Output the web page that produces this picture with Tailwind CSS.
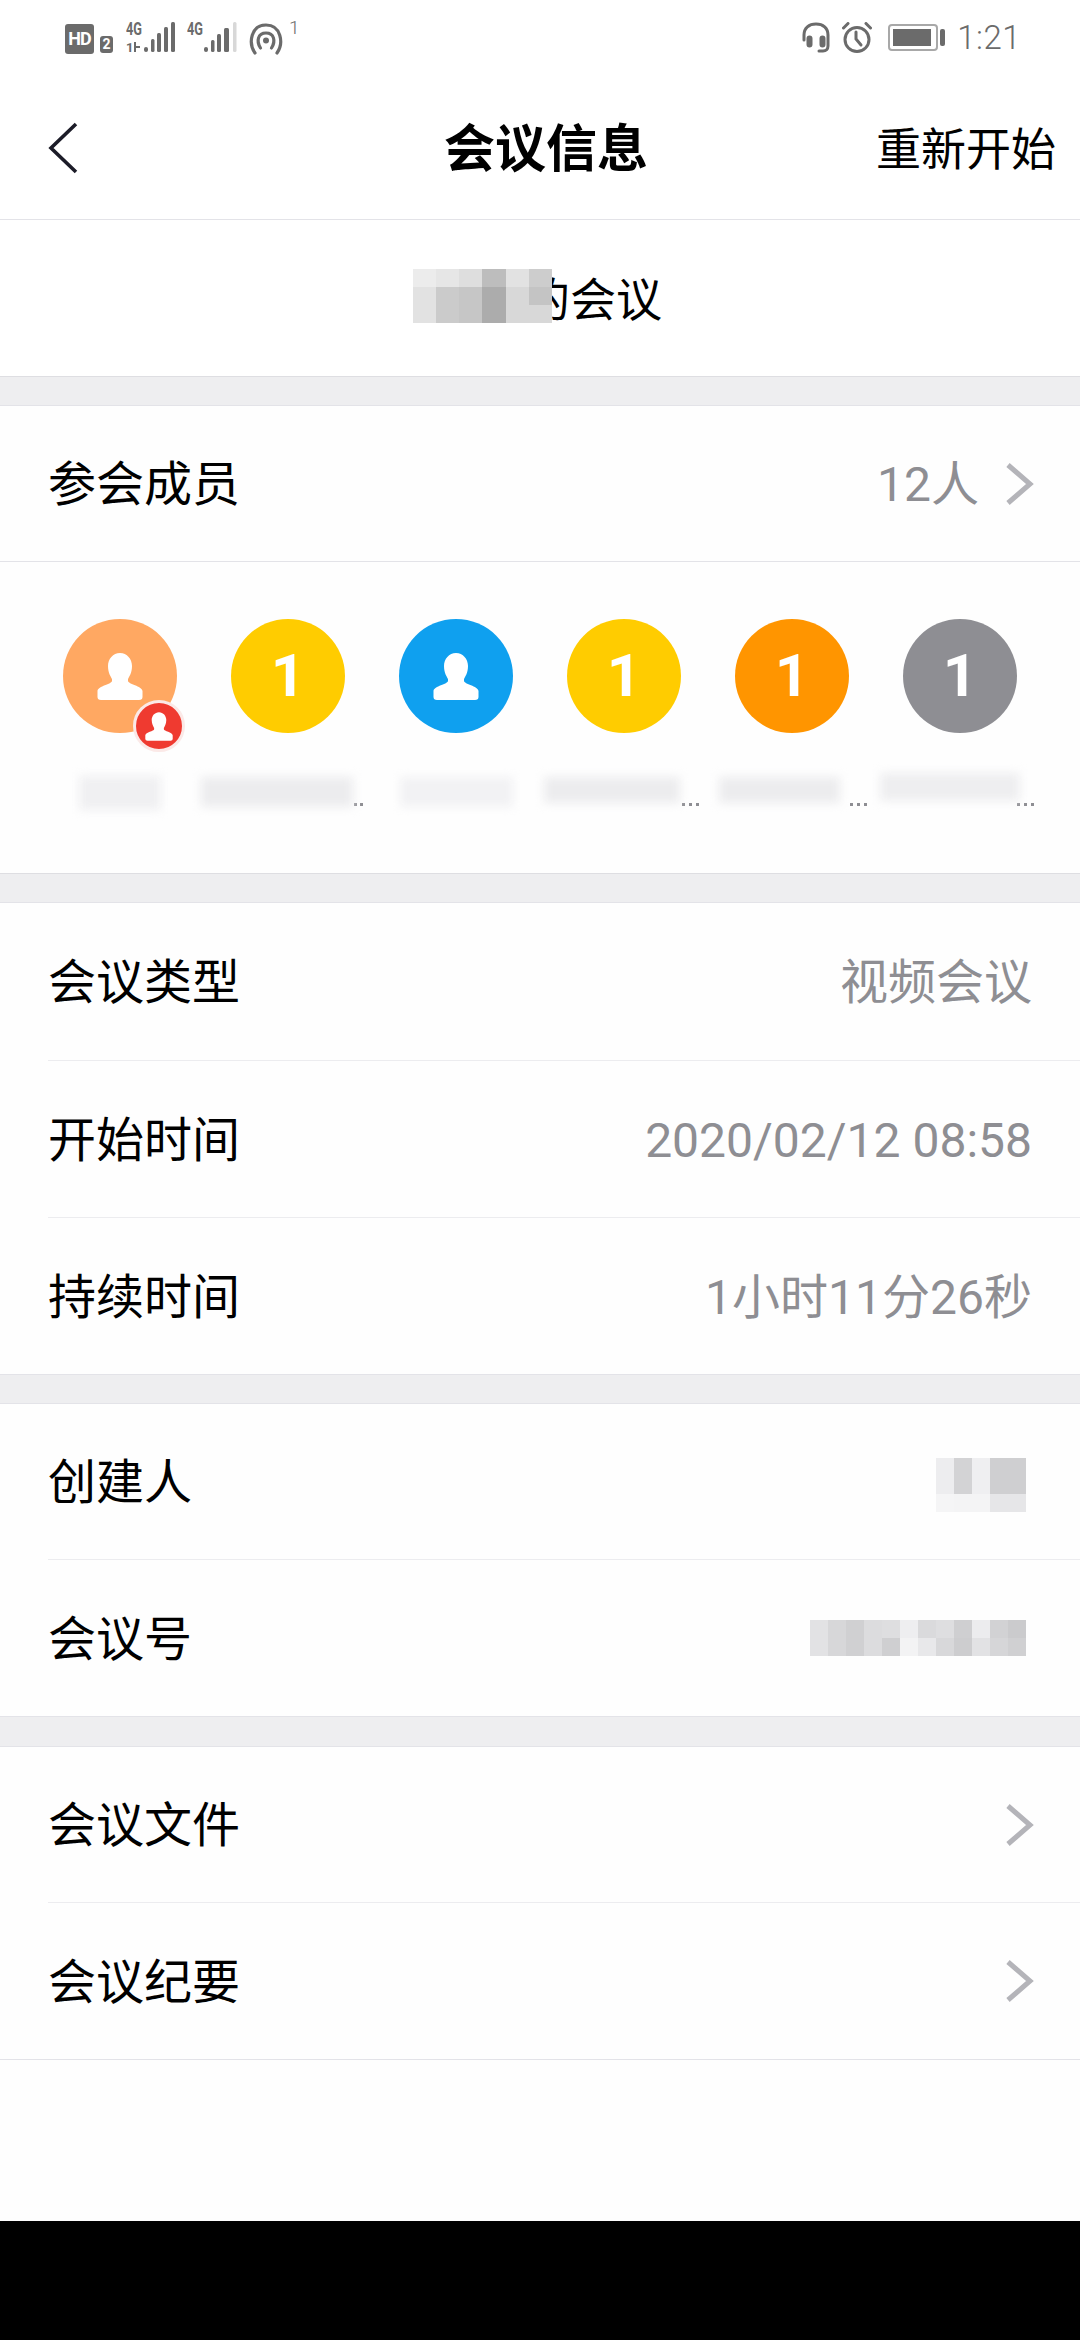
<!DOCTYPE html>
<html lang="zh">
<head>
<meta charset="utf-8">
<script src="https://cdn.jsdelivr.net/npm/@tailwindcss/browser@4"></script>
</head>
<body class="m-0 bg-black">
<div class="w-[1080px] h-[2340px] overflow-hidden flex flex-col bg-[#fefefe] text-black font-['Roboto','Noto_Sans_CJK_SC',sans-serif]">

  <!-- status bar -->
  <div class="h-[76px] shrink-0 bg-white flex items-start justify-between pt-[20px] pl-[65px] pr-[59px] text-[#6b6b6b]">
    <div class="flex items-start">
      <div class="w-[29px] h-[30px] mt-[4px] rounded-[3px] bg-[#6b6b6b] text-white text-[18px] leading-[30px] font-bold text-center tracking-tighter">HD</div>
      <div class="w-[13px] h-[17px] mt-[16px] ml-[6px] rounded-[3px] bg-[#6b6b6b] text-white text-[14px] leading-[17px] font-bold text-center">2</div>
      <div class="ml-[13px] w-[50px] h-[38px] -mt-[3px]">
        <svg width="50" height="38" viewBox="0 -4 50 38" fill="#6b6b6b">
          <text x="0" y="14" font-size="18" font-weight="700" font-family="Roboto" textLength="16" lengthAdjust="spacingAndGlyphs">4G</text>
          <text x="0" y="31" font-size="13" font-weight="700" font-family="Roboto">1</text>
          <path d="M9 21V31M9 26H14" stroke="#6b6b6b" stroke-width="2" fill="none"/>
          <rect x="18" y="26" width="4" height="5" rx="2"/><rect x="25" y="18" width="3.500" height="13" rx="1.500"/><rect x="31" y="12" width="4" height="19" rx="1.500"/><rect x="38" y="6" width="4" height="25" rx="1.500"/>
          <rect x="45" y="1" width="4" height="30" rx="1.500"/>
        </svg>
      </div>
      <div class="ml-[11px] w-[50px] h-[38px] -mt-[3px]">
        <svg width="50" height="38" viewBox="0 -4 50 38" fill="#6b6b6b">
          <text x="0" y="14" font-size="18" font-weight="700" font-family="Roboto" textLength="16" lengthAdjust="spacingAndGlyphs">4G</text>
          <rect x="17" y="26" width="4" height="5" rx="2"/><rect x="24" y="19" width="3.500" height="12" rx="1.500"/><rect x="30" y="13" width="4" height="18" rx="1.500"/><rect x="37" y="7" width="5" height="24" rx="1.500"/>
          <rect x="46" y="1" width="3.500" height="30" rx="1.500" fill="#d8d8d8"/>
        </svg>
      </div>
      <div class="ml-[12px] mt-[3px]">
        <svg width="34" height="32" viewBox="0 0 34 32" fill="none" stroke="#6b6b6b" stroke-width="3.200" stroke-linecap="round">
          <path d="M6 30C-1 20 2 2 17 2C32 2 35 20 28 30"/>
          <path d="M11.500 25C7 18 9 10 17 10C25 10 27 18 22.500 25"/>
          <circle cx="17" cy="17.500" r="3" fill="#6b6b6b" stroke="none"/>
        </svg>
      </div>
      <span class="ml-[6px] -mt-[2px] text-[19px] leading-[20px] font-light">1</span>
    </div>
    <div class="flex items-start">
      <svg class="mt-[2px]" width="28" height="31" viewBox="0 0 28 31" fill="none" stroke="#6b6b6b" stroke-width="3" stroke-linecap="round">
        <path d="M2 18V13C2 6 7 2 14 2C21 2 26 6 26 13V24C26 27 24 29 21 29H17"/>
        <rect x="6" y="15" width="3" height="9" rx="1.500" fill="#6b6b6b"/>
        <rect x="19" y="15" width="3" height="9" rx="1.500" fill="#6b6b6b"/>
      </svg>
      <svg class="ml-[12px] mt-[2px]" width="30" height="31" viewBox="0 0 30 31" fill="none" stroke="#6b6b6b" stroke-width="3" stroke-linecap="round">
        <circle cx="15" cy="17.500" r="12"/>
        <path d="M14 10V17L19 23"/>
        <path d="M1.500 6L6 1.500M28.500 6L24 1.500"/>
      </svg>
      <div class="ml-[16px] mt-[4px] flex items-center">
        <div class="w-[50px] h-[27px] rounded-[4px] border-2 border-[#a8a8a8] p-[3px]"><div class="w-[38px] h-full bg-[#6b6b6b]"></div></div>
        <div class="ml-[2px] w-[5px] h-[17px] rounded-[2px] bg-[#6b6b6b]"></div>
      </div>
      <span class="ml-[12px] text-[33px] leading-[36px] font-light tracking-[0.5px]">1:21</span>
    </div>
  </div>

  <!-- nav bar -->
  <div class="h-[144px] shrink-0 bg-white border-b border-[#e3e3e8] relative flex items-center justify-between pl-[48px] pr-[24px]">
    <svg width="30" height="52" viewBox="0 0 30 52" fill="none" stroke="#1c1c28" stroke-width="3.600"><path d="M28 2L3 26L28 50"/></svg>
    <span class="absolute left-[444px] top-[45px] text-[51px] leading-[58px] font-bold">会议信息</span>
    <span class="mt-[6px] text-[45px] leading-[52px]">重新开始</span>
  </div>

  <!-- meeting name -->
  <div class="h-[157px] shrink-0 bg-white border-b border-[#dedee2] flex items-center pl-[413px]">
    <div class="w-[139px] h-[54px] -mr-[28px] z-10 grid grid-cols-6 grid-rows-3 -mt-[4px]">
      <div class="bg-[#ececec]"></div><div class="bg-[#e6e6e6]"></div><div class="bg-[#dedede]"></div><div class="bg-[#bdbdbd]"></div><div class="bg-[#e2e2e2]"></div><div class="bg-[#cdcdcd]"></div>
      <div class="bg-[#e2e2e2] row-span-2"></div><div class="bg-[#cbcbcb] row-span-2"></div><div class="bg-[#c6c6c6] row-span-2"></div><div class="bg-[#acacac] row-span-2"></div><div class="bg-[#d8d8d8] row-span-2"></div><div class="bg-[#c4c4c4]"></div><div class="bg-[#d8d8d8]"></div>
    </div>
    <span class="mt-[3px] text-[46px] leading-[54px]">的会议</span>
  </div>

  <div class="h-[28px] shrink-0 bg-[#eeeef0]"></div>

  <!-- members -->
  <div class="h-[157px] shrink-0 border-y border-[#e3e3e8] flex items-center pl-[48px] pr-[46px] justify-between">
    <span class="mt-[3px] text-[48px] leading-[56px]">参会成员</span>
    <div class="flex items-center">
      <span class="mt-[3px] text-[48px] leading-[56px] text-[#8e8e93]">12人</span>
      <svg class="ml-[26px]" width="29" height="44" viewBox="0 0 29 44" fill="none" stroke="#b4b4b9" stroke-width="5"><path d="M3 3L25 22L3 41"/></svg>
    </div>
  </div>

  <!-- avatars -->
  <div class="h-[312px] shrink-0 border-b border-[#dedee2] pl-[63px] pt-[57px] flex items-start">
    <div class="w-[168px] shrink-0 flex flex-col">
      <div class="size-[114px] relative">
        <div class="size-[114px] rounded-full bg-[#ffa862] flex items-center justify-center">
          <svg width="46" height="47" viewBox="0 0 46 47" fill="#fff"><path d="M23 0C30 0 35 6 35 13C35 20 32 24 31 26V28C31 31 45 33 45.500 38V44Q45.500 47 42 47H4Q.5 47 .5 44V38C1 33 15 31 15 28V26C14 24 11 20 11 13C11 6 16 0 23 0Z"/></svg>
        </div>
        <div class="absolute left-[70px] top-[81px] size-[52px] rounded-full bg-[#ef3a30] border-[3px] border-[#fbe9e7] flex items-center justify-center">
          <svg width="28" height="29" viewBox="0 0 46 47" fill="#fff"><path d="M23 0C30 0 35 6 35 13C35 20 32 24 31 26V28C31 31 45 33 45.500 38V44Q45.500 47 42 47H4Q.5 47 .5 44V38C1 33 15 31 15 28V26C14 24 11 20 11 13C11 6 16 0 23 0Z"/></svg>
        </div>
      </div>
      <div class="w-[82px] h-[34px] ml-[16px] mt-[43px] bg-[#f0f0f2] blur-[5px]"></div>
    </div>
    <div class="w-[168px] shrink-0 flex flex-col">
      <div class="size-[114px] rounded-full bg-[#ffcc00] flex items-center justify-center text-white text-[60px] font-bold leading-none">1</div>
      <div class="flex items-end -ml-[30px] mt-[41px] h-[36px]">
        <div class="w-[152px] h-[30px] mb-[3px] bg-[#ececee] blur-[5px]"></div>
        <div class="ml-[1px] mb-[4px] flex gap-[3px]"><i class="size-[3px] bg-[#8e8e93]"></i><i class="size-[3px] bg-[#8e8e93]"></i></div>
      </div>
    </div>
    <div class="w-[168px] shrink-0 flex flex-col">
      <div class="size-[114px] rounded-full bg-[#0fa0ef] flex items-center justify-center">
        <svg width="46" height="47" viewBox="0 0 46 47" fill="#fff"><path d="M23 0C30 0 35 6 35 13C35 20 32 24 31 26V28C31 31 45 33 45.500 38V44Q45.500 47 42 47H4Q.5 47 .5 44V38C1 33 15 31 15 28V26C14 24 11 20 11 13C11 6 16 0 23 0Z"/></svg>
      </div>
      <div class="w-[113px] h-[30px] ml-[1px] mt-[44px] bg-[#f2f2f4] blur-[5px]"></div>
    </div>
    <div class="w-[168px] shrink-0 flex flex-col">
      <div class="size-[114px] rounded-full bg-[#ffcc00] flex items-center justify-center text-white text-[60px] font-bold leading-none">1</div>
      <div class="flex items-end -ml-[23px] mt-[41px] h-[36px]">
        <div class="w-[136px] h-[26px] mb-[7px] bg-[#ececee] blur-[5px]"></div>
        <div class="ml-[2px] mb-[4px] flex gap-[4px]"><i class="size-[3px] bg-[#8e8e93]"></i><i class="size-[3px] bg-[#8e8e93]"></i><i class="size-[3px] bg-[#8e8e93]"></i></div>
      </div>
    </div>
    <div class="w-[168px] shrink-0 flex flex-col">
      <div class="size-[114px] rounded-full bg-[#ff9500] flex items-center justify-center text-white text-[60px] font-bold leading-none">1</div>
      <div class="flex items-end -ml-[16px] mt-[41px] h-[36px]">
        <div class="w-[121px] h-[26px] mb-[7px] bg-[#ececee] blur-[5px]"></div>
        <div class="ml-[10px] mb-[4px] flex gap-[4px]"><i class="size-[3px] bg-[#8e8e93]"></i><i class="size-[3px] bg-[#8e8e93]"></i><i class="size-[3px] bg-[#8e8e93]"></i></div>
      </div>
    </div>
    <div class="w-[168px] shrink-0 flex flex-col">
      <div class="size-[114px] rounded-full bg-[#8e8e93] flex items-center justify-center text-white text-[60px] font-bold leading-none">1</div>
      <div class="flex items-end -ml-[23px] mt-[37px] h-[40px]">
        <div class="w-[140px] h-[28px] mb-[9px] bg-[#eeeef0] blur-[5px]"></div>
        <div class="-ml-[3px] mb-[4px] flex gap-[4px]"><i class="size-[3px] bg-[#8e8e93]"></i><i class="size-[3px] bg-[#8e8e93]"></i><i class="size-[3px] bg-[#8e8e93]"></i></div>
      </div>
    </div>
  </div>

  <div class="h-[28px] shrink-0 bg-[#eeeef0]"></div>

  <!-- info group 1 -->
  <div class="shrink-0 border-y border-[#e3e3e8] flex flex-col">
    <div class="h-[158px] ml-[48px] pr-[48px] border-b border-[#ececef] flex items-center justify-between">
      <span class="mt-[3px] text-[48px] leading-[56px]">会议类型</span>
      <span class="mt-[3px] text-[48px] leading-[56px] text-[#8e8e93]">视频会议</span>
    </div>
    <div class="h-[157px] ml-[48px] pr-[48px] border-b border-[#ececef] flex items-center justify-between">
      <span class="mt-[3px] text-[48px] leading-[56px]">开始时间</span>
      <span class="mt-[3px] text-[48px] leading-[56px] text-[#8e8e93]">2020/02/12 08:58</span>
    </div>
    <div class="h-[156px] ml-[48px] pr-[48px] flex items-center justify-between">
      <span class="mt-[3px] text-[48px] leading-[56px]">持续时间</span>
      <span class="mt-[3px] text-[48px] leading-[56px] text-[#8e8e93]">1小时11分26秒</span>
    </div>
  </div>

  <div class="h-[28px] shrink-0 bg-[#eeeef0]"></div>

  <!-- info group 2 -->
  <div class="shrink-0 border-y border-[#e3e3e8] flex flex-col">
    <div class="h-[156px] ml-[48px] pr-[54px] border-b border-[#ececef] flex items-center justify-between">
      <span class="mt-[3px] text-[48px] leading-[56px]">创建人</span>
      <div class="w-[90px] h-[54px] mt-[6px] grid grid-cols-5 grid-rows-3">
        <div class="bg-[#ededef] row-span-2"></div><div class="bg-[#d3d3d5] row-span-2"></div><div class="bg-[#efeff1] row-span-2"></div><div class="bg-[#cfcfd1] row-span-2 col-span-2"></div>
        <div class="bg-[#f5f5f6]"></div><div class="bg-[#f4f4f5]"></div><div class="bg-[#f4f4f5]"></div><div class="bg-[#e6e6e8] col-span-2"></div>
      </div>
    </div>
    <div class="h-[156px] ml-[48px] pr-[54px] flex items-center justify-between">
      <span class="mt-[3px] text-[48px] leading-[56px]">会议号</span>
      <div class="w-[216px] h-[36px] grid grid-cols-12 grid-rows-2">
        <div class="bg-[#e2e2e4] row-span-2"></div><div class="bg-[#d7d7d9] row-span-2"></div><div class="bg-[#d0d0d2] row-span-2"></div><div class="bg-[#dcdcde] row-span-2"></div><div class="bg-[#dedee0]"></div><div class="bg-[#eeeef0]"></div><div class="bg-[#dadadc]"></div><div class="bg-[#dedee0]"></div><div class="bg-[#cfcfd1]"></div><div class="bg-[#ececee]"></div><div class="bg-[#d2d2d4]"></div><div class="bg-[#cbcbcd]"></div>
        <div class="bg-[#cfcfd1]"></div><div class="bg-[#f3f3f4]"></div><div class="bg-[#e8e8ea]"></div><div class="bg-[#d8d8da]"></div><div class="bg-[#cdcdcf]"></div><div class="bg-[#e2e2e4]"></div><div class="bg-[#d6d6d8]"></div><div class="bg-[#d0d0d2]"></div>
      </div>
    </div>
  </div>

  <div class="h-[29px] shrink-0 bg-[#eeeef0]"></div>

  <!-- files -->
  <div class="shrink-0 border-y border-[#e3e3e8] flex flex-col">
    <div class="h-[156px] ml-[48px] pr-[46px] border-b border-[#ececef] flex items-center justify-between">
      <span class="mt-[3px] text-[48px] leading-[56px]">会议文件</span>
      <svg width="29" height="44" viewBox="0 0 29 44" fill="none" stroke="#b4b4b9" stroke-width="5"><path d="M3 3L25 22L3 41"/></svg>
    </div>
    <div class="h-[156px] ml-[48px] pr-[46px] flex items-center justify-between">
      <span class="mt-[3px] text-[48px] leading-[56px]">会议纪要</span>
      <svg width="29" height="44" viewBox="0 0 29 44" fill="none" stroke="#b4b4b9" stroke-width="5"><path d="M3 3L25 22L3 41"/></svg>
    </div>
  </div>

  <div class="flex-1"></div>
  <div class="h-[119px] shrink-0 bg-black"></div>
</div>
</body>
</html>
